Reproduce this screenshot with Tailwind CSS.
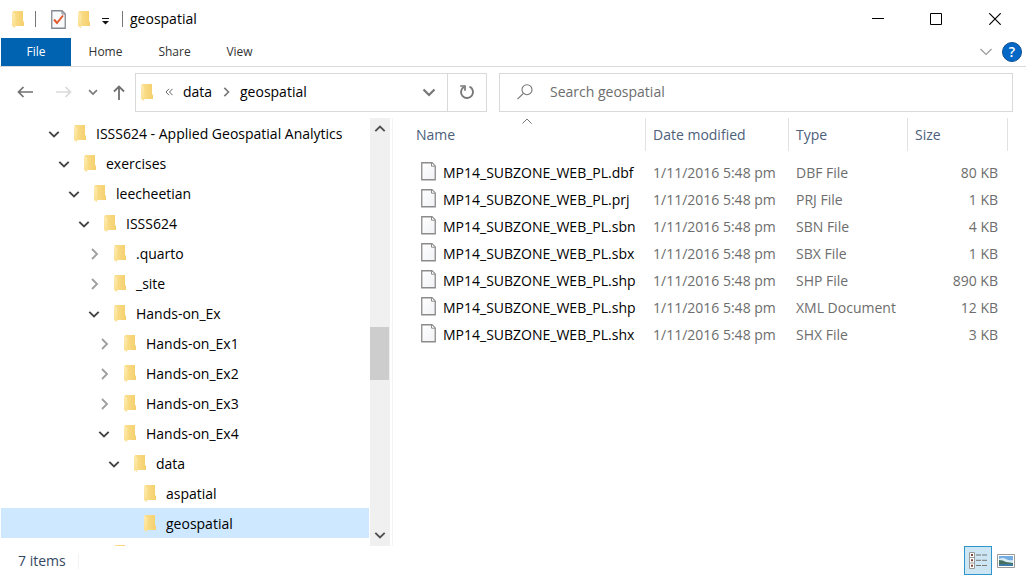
<!DOCTYPE html>
<html lang="en">
<head>
<meta charset="utf-8">
<meta name="viewport" content="width=device-width, initial-scale=1">
<title>geospatial</title>
<script src="https://cdn.jsdelivr.net/npm/@tailwindcss/browser@4"></script>
</head>
<body class="flex h-screen flex-col overflow-hidden bg-white font-['Open_Sans','Noto_Sans',sans-serif] text-[14px] leading-5 text-black">
<svg class="absolute size-0" aria-hidden="true">
  <defs>
    <linearGradient id="gold" x1="0" y1="0" x2="1" y2="0"><stop offset="0" stop-color="#fbe08f"/><stop offset="1" stop-color="#f4cf6c"/></linearGradient>
    <linearGradient id="flap" x1="0" y1="0" x2="0" y2="1"><stop offset="0" stop-color="#fdeab0"/><stop offset="1" stop-color="#fbdf8c"/></linearGradient>
    <linearGradient id="paper" x1="0" y1="0" x2="1" y2="1"><stop offset="0" stop-color="#ffffff"/><stop offset="1" stop-color="#f1f2f5"/></linearGradient>
    <symbol id="folder" viewBox="0 0 12 17"><path d="M1 0H11V10L12 11V15H3L1 13Z" fill="url(#gold)"/><path d="M0 0.5L3.2 3V17L0 15Z" fill="url(#flap)"/></symbol>
    <symbol id="file" viewBox="0 0 15 19"><path d="M0.75 0.75H11L14.25 4V17.75H0.75Z" fill="url(#paper)" stroke="#8b8b8b" stroke-width="1.3"/><path d="M10.5 1V4.2H14" fill="#fff" stroke="#8b8b8b"/></symbol>
    <symbol id="down" viewBox="0 0 12 12"><path d="M1.3 3.8L6 8.5L10.7 3.8" fill="none" stroke="currentColor" stroke-width="1.9"/></symbol>
    <symbol id="right" viewBox="0 0 12 12"><path d="M4 1L9 6L4 11" fill="none" stroke="currentColor" stroke-width="1.9"/></symbol>
  </defs>
</svg>

<header class="flex h-[38px] shrink-0 items-center">
  <svg class="ml-3 h-[17px] w-3"><use href="#folder"/></svg>
  <span class="ml-[11px] h-4 w-px bg-[#777]"></span>
  <button class="ml-[15px]" aria-label="Properties"><svg class="block h-[19px] w-[15px]" viewBox="0 0 15 19"><path d="M0.75 0.75H11L14.25 4V18.25H0.75Z" fill="#f8f9fb" stroke="#858a91" stroke-width="1.3"/><path d="M11 1V4H14" fill="none" stroke="#858a91"/><path d="M3 9.5L6 13L12 5.5" fill="none" stroke="#e2582c" stroke-width="2"/></svg></button>
  <button class="ml-3" aria-label="New folder"><svg class="block h-[17px] w-3"><use href="#folder"/></svg></button>
  <button class="ml-[11px]" aria-label="Customize Quick Access Toolbar"><svg class="mt-1 block h-2 w-[9px]" viewBox="0 0 9 8"><path d="M1 1.5H8" stroke="#111"/><path d="M1 4H8L4.5 7.5Z" fill="#111"/></svg></button>
  <span class="ml-3 h-4 w-px bg-[#777]"></span>
  <h1 class="ml-[7px] text-[14px]">geospatial</h1>
  <div class="ml-auto flex pr-px">
    <button class="flex h-[38px] w-[58px] items-center justify-center" aria-label="Minimize"><svg class="size-3" viewBox="0 0 12 12"><path d="M0 5.5H12" stroke="#000"/></svg></button>
    <button class="flex h-[38px] w-[58px] items-center justify-center" aria-label="Maximize"><svg class="size-3" viewBox="0 0 12 12"><path d="M.5.5H11.5V11.5H.5Z" fill="none" stroke="#000"/></svg></button>
    <button class="flex h-[38px] w-[60px] items-center justify-center" aria-label="Close"><svg class="size-3" viewBox="0 0 12 12"><path d="M.3.3L11.7 11.7M11.7.3L.3 11.7" stroke="#000" stroke-width="1.2"/></svg></button>
  </div>
</header>

<nav class="flex h-[29px] shrink-0 items-center border-b border-[#d9d9d9] pl-px text-[12px] text-[#333]" aria-label="Ribbon">
  <button class="h-7 w-[70px] bg-[#0063b1] text-white">File</button>
  <button class="ml-4 w-[37px]">Home</button>
  <button class="ml-8 w-[37px]">Share</button>
  <button class="ml-8 w-[29px]">View</button>
  <button class="ml-auto text-[#999]" aria-label="Expand the Ribbon"><svg class="h-2 w-3" viewBox="0 0 12 8"><path d="M.5 1L6 6.5L11.5 1" fill="none" stroke="currentColor" stroke-width="1.2"/></svg></button>
  <button class="mr-1 ml-[10px] flex size-5 items-center justify-center rounded-full border border-[#0c4f92] bg-[#0568c6] text-[14px] font-semibold text-white" aria-label="Help">?</button>
</nav>

<div class="flex h-[51px] shrink-0 items-center pr-[13px] pb-px pl-[17px]">
  <button class="text-[#707070]" aria-label="Back"><svg class="h-3 w-4" viewBox="0 0 16 12"><path d="M16 6H1.5M6.5 1L1.5 6L6.5 11" fill="none" stroke="currentColor" stroke-width="1.7"/></svg></button>
  <button class="ml-[23px] text-[#dadada]" aria-label="Forward"><svg class="h-3 w-4" viewBox="0 0 16 12"><path d="M0 6H14.5M9.5 1L14.5 6L9.5 11" fill="none" stroke="currentColor" stroke-width="1.7"/></svg></button>
  <button class="ml-4 text-[#777]" aria-label="Recent locations"><svg class="size-[10px]"><use href="#down"/></svg></button>
  <button class="ml-[15px] text-[#707070]" aria-label="Up"><svg class="h-[15px] w-3" viewBox="0 0 12 15"><path d="M6 15V1.5M1 6.5L6 1.5L11 6.5" fill="none" stroke="currentColor" stroke-width="1.8"/></svg></button>
  <div class="ml-[10px] flex h-[39px] w-[352px] items-center border border-[#d9d9d9]">
    <svg class="ml-[5px] h-[17px] w-3"><use href="#folder"/></svg>
    <svg class="ml-3 h-2 w-2 text-[#666]" viewBox="0 0 8 8"><path d="M4 .8L1 4L4 7.2M7.5 .8L4.5 4L7.5 7.2" fill="none" stroke="currentColor"/></svg>
    <a href="#" class="ml-[10px] w-[30px]">data</a>
    <svg class="ml-2 size-[10px] text-[#777]"><use href="#right"/></svg>
    <a href="#" class="ml-[9px]">geospatial</a>
    <button class="ml-auto text-[#777]" aria-label="Previous locations"><svg class="size-[14px]"><use href="#down"/></svg></button>
    <button class="ml-[11px] flex h-full w-[39px] items-center justify-center border-l border-[#d9d9d9] text-[#777]" aria-label="Refresh"><svg class="size-4" viewBox="0 0 16 16"><path d="M10.5 2.6A6 6 0 1 1 4.8 3" fill="none" stroke="currentColor" stroke-width="1.9"/><path d="M1.2 2H6V6.8" fill="none" stroke="currentColor" stroke-width="1.7"/></svg></button>
  </div>
  <label class="ml-3 flex h-[39px] flex-1 items-center border border-[#d9d9d9] pl-[17px]">
    <svg class="size-4 text-[#777]" viewBox="0 0 16 16"><circle cx="10" cy="5.7" r="5" fill="none" stroke="currentColor" stroke-width="1.1"/><path d="M6.4 9.3L.5 15.2" stroke="currentColor" stroke-width="1.2"/></svg>
    <input type="text" aria-label="Search geospatial" placeholder="Search geospatial" class="ml-[17px] min-w-0 flex-1 outline-none placeholder:text-[#6d6d6d]">
  </label>
</div>

<main class="flex min-h-0 flex-1">
  <ul class="w-[368px] shrink-0 overflow-hidden ml-px [&_a]:ml-[10px] [&_a]:whitespace-nowrap [&_li]:flex [&_li]:h-[30px] [&_li]:items-center [&_li]:pt-[2px] [&_li>svg]:ml-[14px] [&_li>svg]:h-[17px] [&_li>svg]:w-3 [&_li>svg]:mb-[2px] [&_button]:text-[#444] [&_button_svg]:size-3" aria-label="Folders">
    <li class="pl-[47px]"><button aria-label="Collapse"><svg><use href="#down"/></svg></button><svg><use href="#folder"/></svg><a href="#">ISSS624 - Applied Geospatial Analytics</a></li>
    <li class="pl-[57px]"><button aria-label="Collapse"><svg><use href="#down"/></svg></button><svg><use href="#folder"/></svg><a href="#">exercises</a></li>
    <li class="pl-[67px]"><button aria-label="Collapse"><svg><use href="#down"/></svg></button><svg><use href="#folder"/></svg><a href="#">leecheetian</a></li>
    <li class="pl-[77px]"><button aria-label="Collapse"><svg><use href="#down"/></svg></button><svg><use href="#folder"/></svg><a href="#">ISSS624</a></li>
    <li class="pl-[87px]"><button aria-label="Expand"><svg class="text-[#a0a0a0]"><use href="#right"/></svg></button><svg><use href="#folder"/></svg><a href="#">.quarto</a></li>
    <li class="pl-[87px]"><button aria-label="Expand"><svg class="text-[#a0a0a0]"><use href="#right"/></svg></button><svg><use href="#folder"/></svg><a href="#">_site</a></li>
    <li class="pl-[87px]"><button aria-label="Collapse"><svg><use href="#down"/></svg></button><svg><use href="#folder"/></svg><a href="#">Hands-on_Ex</a></li>
    <li class="pl-[97px]"><button aria-label="Expand"><svg class="text-[#a0a0a0]"><use href="#right"/></svg></button><svg><use href="#folder"/></svg><a href="#">Hands-on_Ex1</a></li>
    <li class="pl-[97px]"><button aria-label="Expand"><svg class="text-[#a0a0a0]"><use href="#right"/></svg></button><svg><use href="#folder"/></svg><a href="#">Hands-on_Ex2</a></li>
    <li class="pl-[97px]"><button aria-label="Expand"><svg class="text-[#a0a0a0]"><use href="#right"/></svg></button><svg><use href="#folder"/></svg><a href="#">Hands-on_Ex3</a></li>
    <li class="pl-[97px]"><button aria-label="Collapse"><svg><use href="#down"/></svg></button><svg><use href="#folder"/></svg><a href="#">Hands-on_Ex4</a></li>
    <li class="pl-[107px]"><button aria-label="Collapse"><svg><use href="#down"/></svg></button><svg><use href="#folder"/></svg><a href="#">data</a></li>
    <li class="pl-[129px]"><svg><use href="#folder"/></svg><a href="#">aspatial</a></li>
    <li class="bg-[#cde8ff] pl-[129px]"><svg><use href="#folder"/></svg><a href="#" aria-current="true">geospatial</a></li>
    <li class="pl-[99px]"><svg><use href="#folder"/></svg></li>
  </ul>
  <div class="ml-px flex w-5 shrink-0 flex-col items-center bg-[#f0f0f0] text-[#505050]">
    <button class="flex h-[22px] w-full items-center justify-center" aria-label="Scroll up"><svg class="size-3 rotate-180"><use href="#down"/></svg></button>
    <div class="flex w-full flex-1 flex-col">
      <div class="grow-[187]"></div>
      <div class="mr-px h-[53px] bg-[#cdcdcd]"></div>
      <div class="grow-[144]"></div>
    </div>
    <button class="flex h-[22px] w-full items-center justify-center" aria-label="Scroll down"><svg class="size-3"><use href="#down"/></svg></button>
  </div>
  <section class="ml-[2px] min-w-0 flex-1 border-l border-[#f3f3f3]" aria-label="Files">
    <table class="w-[615px] table-fixed border-separate border-spacing-0 text-left text-[#6d6d6d] [&_td]:h-[27px] [&_td]:p-0 [&_td]:pl-[7px] [&_td]:whitespace-nowrap [&_td:first-child]:pl-7 [&_td:first-child]:text-black [&_td:last-child]:pr-[10px] [&_td:last-child]:text-right [&_td_svg]:mr-[7px] [&_td_svg]:mb-[2px] [&_td_svg]:h-[19px] [&_td_svg]:w-[15px] [&_td_svg]:shrink-0 [&_th]:border-r [&_th]:border-[#e2e2e2] [&_th]:p-0 [&_th]:pl-[7px] [&_th]:font-normal [&_th:first-child]:pl-[23px]">
      <colgroup><col class="w-[253px]"><col class="w-[143px]"><col class="w-[119px]"><col class="w-[100px]"></colgroup>
      <thead><tr class="h-[33px] text-[#4c607a]">
        <th class="relative">Name<svg class="absolute top-0 left-[129px] h-[6px] w-[10px] text-[#777]" viewBox="0 0 10 6"><path d="M.5 5.5L5 1L9.5 5.5" fill="none" stroke="currentColor"/></svg></th>
        <th>Date modified</th><th>Type</th><th>Size</th></tr></thead>
      <tbody>
        <tr aria-hidden="true"><th class="h-2 border-none" colspan="4"></th></tr>
        <tr><td><div class="flex items-center"><svg><use href="#file"/></svg>MP14_SUBZONE_WEB_PL.dbf</div></td><td>1/11/2016 5:48 pm</td><td>DBF File</td><td>80 KB</td></tr>
        <tr><td><div class="flex items-center"><svg><use href="#file"/></svg>MP14_SUBZONE_WEB_PL.prj</div></td><td>1/11/2016 5:48 pm</td><td>PRJ File</td><td>1 KB</td></tr>
        <tr><td><div class="flex items-center"><svg><use href="#file"/></svg>MP14_SUBZONE_WEB_PL.sbn</div></td><td>1/11/2016 5:48 pm</td><td>SBN File</td><td>4 KB</td></tr>
        <tr><td><div class="flex items-center"><svg><use href="#file"/></svg>MP14_SUBZONE_WEB_PL.sbx</div></td><td>1/11/2016 5:48 pm</td><td>SBX File</td><td>1 KB</td></tr>
        <tr><td><div class="flex items-center"><svg><use href="#file"/></svg>MP14_SUBZONE_WEB_PL.shp</div></td><td>1/11/2016 5:48 pm</td><td>SHP File</td><td>890 KB</td></tr>
        <tr><td><div class="flex items-center"><svg><use href="#file"/></svg>MP14_SUBZONE_WEB_PL.shp</div></td><td>1/11/2016 5:48 pm</td><td>XML Document</td><td>12 KB</td></tr>
        <tr><td><div class="flex items-center"><svg><use href="#file"/></svg>MP14_SUBZONE_WEB_PL.shx</div></td><td>1/11/2016 5:48 pm</td><td>SHX File</td><td>3 KB</td></tr>
      </tbody>
    </table>
  </section>
</main>

<footer class="flex h-[29px] shrink-0 items-center pr-[11px] pl-[18px] text-[#33475f]">
  <span>7 items</span>
  <span class="ml-3 h-4 w-px bg-[#f3f3f3]"></span>
  <button class="ml-auto flex h-[29px] w-7 items-center justify-center border border-[#2f96cc] bg-[#cde6f4]" aria-label="Details view"><svg class="h-[17px] w-[18px]" viewBox="0 0 18 17"><path d="M.5 .5H5.5V16.5H.5ZM.5 5.5H5.5M.5 11H5.5" fill="#fff" stroke="#9a9a9a"/><path d="M2 3H4M2 8.3H4M2 13.8H4" stroke="#7b4a3c" stroke-width="2"/><path d="M7 3H12M13 3H18M7 8.3H12M13 8.3H18M7 13.5H12M13 13.5H18" stroke="#777"/></svg></button>
  <button class="ml-[5px]" aria-label="Large thumbnails view"><svg class="block h-[14px] w-[18px]" viewBox="0 0 18 14"><path d="M.5.5H17.5V13.5H.5Z" fill="#fff" stroke="#9a9a9a"/><path d="M2 2H16V12H2Z" fill="#77ace0"/><path d="M2 5Q6 3 9 5T16 6V9H2Z" fill="#d8ecf7"/><path d="M2 6Q6 6 9 8L16 9V10H2Z" fill="#47705f"/><path d="M2 10H16V12H2Z" fill="#3f79a8"/></svg></button>
</footer>
</body>
</html>
